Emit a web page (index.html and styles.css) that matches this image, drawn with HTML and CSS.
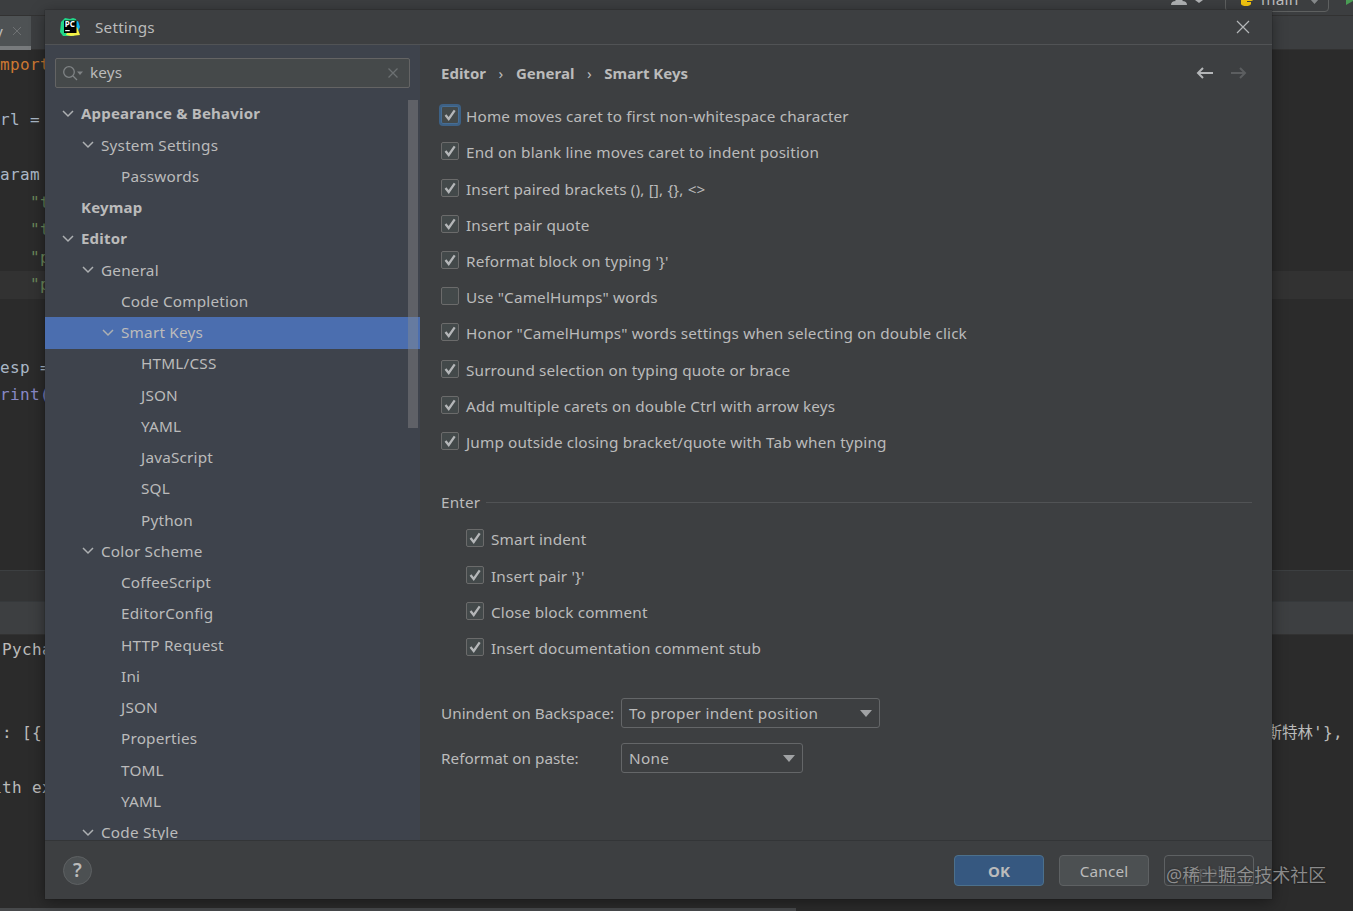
FILE: index.html
```
<!DOCTYPE html>
<html lang="en">
<head>
	<meta charset="UTF-8">
	<title>Settings</title>
	<link rel="stylesheet" href="styles.css">
</head>
<body>
	<!-- IDE window behind the dialog -->
	<div id="ide">
		<div class="toolbar">
			<svg class="user" width="34" height="10"><circle cx="8" cy="-3" r="5"/><path d="M0 5q0-4 5-4h6q5 0 5 4z"/><path d="M24 0h8l-4 3z"/></svg>
			<span class="sep"></span>
			<div class="run-config">
				<svg width="17" height="16" viewBox="0 0 17 16"><path fill="#3e7dae" d="M1 4q0-2 3-2h5v3H4v5H1z"/><path fill="#f2c40f" d="M16 6q0 5-3 5H9v1h4v2q-1 2-5 2t-5-2v-3q0-3 3-3h4q2 0 2-4h2q2 0 2 2z"/></svg>
				<span>main</span>
				<svg width="9" height="6"><path d="M0 0h9L4.500 5z" fill="#85888a"/></svg>
			</div>
			<svg class="play" width="12" height="14"><path d="M0 0l12 6L0 13z" fill="#499c54"/></svg>
		</div>
		<div class="tabs"><div class="tab"><span>y</span><svg width="10" height="10"><path d="M1 1l8 8M9 1L1 9"/></svg></div></div>
		<div class="editor">
			<p class="kw">import</p>
			<p></p>
			<p>url =</p>
			<p></p>
			<p>param</p>
			<p class="str">    "t</p>
			<p class="str">    "t</p>
			<p class="str">    "p</p>
			<p class="str current">    "p</p>
			<p></p>
			<p></p>
			<p>resp =</p>
			<p class="fn">print(</p>
		</div>
		<div class="split"></div>
		<div class="tool-head"></div>
		<div class="console">
			<p>(Pycha</p>
			<p></p>
			<p></p>
			<p class="wide"><span> : [{</span><span><span class="zh">斯特林</span>'},</span></p>
			<p></p>
			<p>ith ex</p>
		</div>
		<div class="status"></div>
	</div>

	<div id="dialog">
		<div class="titlebar">
			<svg class="logo" width="20" height="20" viewBox="0 0 20 20">
				<path fill="#21d789" d="M1 5l4-4 5 1 3-1 3 1 1 4-3 13-11 0-3-4z"/>
				<path fill="#0bb5f0" d="M15 5l3-1 2 6-2 4-4 1z"/>
				<path fill="#f5f046" d="M7 16l10-6 3 8-9 1-5-1z"/>
				<path fill="#000" d="M4 3.500h12.500v12.500H4z"/>
				<text x="4.700" y="10.200" font-size="8">PC</text>
				<path fill="#fff" d="M5.200 13h4.500v1.200H5.200z"/>
			</svg>
			<span class="title">Settings</span>
			<svg class="close" width="14" height="14"><path d="M1 1l12 12M13 1L1 13"/></svg>
		</div>
		<div class="main">
			<div class="sidebar">
				<div class="search">
					<svg width="22" height="16"><circle cx="6" cy="7" r="5.300"/><path d="M10 11l4 4"/><path class="arrow" d="M14 6.500h6l-3 3.500z"/></svg>
					<span>keys</span>
					<svg class="clear" width="12" height="12"><path d="M1.500 1.500l9 9M10.500 1.500l-9 9"/></svg>
				</div>
				<ul class="tree">
					<li class="l0 open"><b>Appearance &amp; Behavior</b></li>
					<li class="l1 open">System Settings</li>
					<li class="l2">Passwords</li>
					<li class="l0"><b>Keymap</b></li>
					<li class="l0 open"><b>Editor</b></li>
					<li class="l1 open">General</li>
					<li class="l2">Code Completion</li>
					<li class="l2 open selected">Smart Keys</li>
					<li class="l3">HTML/CSS</li>
					<li class="l3">JSON</li>
					<li class="l3">YAML</li>
					<li class="l3">JavaScript</li>
					<li class="l3">SQL</li>
					<li class="l3">Python</li>
					<li class="l1 open">Color Scheme</li>
					<li class="l2">CoffeeScript</li>
					<li class="l2">EditorConfig</li>
					<li class="l2">HTTP Request</li>
					<li class="l2">Ini</li>
					<li class="l2">JSON</li>
					<li class="l2">Properties</li>
					<li class="l2">TOML</li>
					<li class="l2">YAML</li>
					<li class="l1 open">Code Style</li>
				</ul>
				<div class="scrollbar"></div>
			</div>
			<div class="content">
				<div class="crumbs">
					<b>Editor</b><i>›</i><b>General</b><i>›</i><b>Smart Keys</b>
					<svg width="54" height="16"><path class="back" d="M18 8H3M8 3L3 8l5 5"/><path class="forward" d="M36 8h14M45 3l5 5-5 5"/></svg>
				</div>
				<div class="checks">
					<label class="on focus">Home moves caret to first non-whitespace character</label>
					<label class="on">End on blank line moves caret to indent position</label>
					<label class="on">Insert paired brackets (), [], {}, &lt;&gt;</label>
					<label class="on">Insert pair quote</label>
					<label class="on">Reformat block on typing '}'</label>
					<label>Use "CamelHumps" words</label>
					<label class="on">Honor "CamelHumps" words settings when selecting on double click</label>
					<label class="on">Surround selection on typing quote or brace</label>
					<label class="on">Add multiple carets on double Ctrl with arrow keys</label>
					<label class="on">Jump outside closing bracket/quote with Tab when typing</label>
				</div>
				<div class="group">Enter</div>
				<div class="checks indent">
					<label class="on">Smart indent</label>
					<label class="on">Insert pair '}'</label>
					<label class="on">Close block comment</label>
					<label class="on">Insert documentation comment stub</label>
				</div>
				<div class="field"><span>Unindent on Backspace:</span><div class="combo">To proper indent position</div></div>
				<div class="field"><span>Reformat on paste:</span><div class="combo short">None</div></div>
			</div>
		</div>
		<div class="footer">
			<div class="help">?</div>
			<div class="btn ok">OK</div>
			<div class="btn">Cancel</div>
			<div class="btn disabled">Apply</div>
		</div>
	</div>
	<div class="watermark">@稀土掘金技术社区</div>
	<script>
		(function() {
			var ns="http://www.w3.org/2000/svg";
			//生成小图标
			function icon(cls,w,h,d) {
				var svg=document.createElementNS(ns,"svg");
				var path=document.createElementNS(ns,"path");
				svg.setAttribute("class",cls);
				svg.setAttribute("width",w);
				svg.setAttribute("height",h);
				path.setAttribute("d",d);
				svg.appendChild(path);
				return svg;
			}
			//树节点箭头
			document.querySelectorAll(".tree .open").forEach(function(li) {
				li.prepend(icon("chevron",12,8,"M1 1l5 5 5-5"));
			});
			//复选框
			document.querySelectorAll(".checks label").forEach(function(label) {
				label.prepend(icon("box",18,18,label.classList.contains("on")?"M3.500 8l3.200 4L12.700 3.300":""));
			});
			//下拉箭头
			document.querySelectorAll(".combo").forEach(function(combo) {
				combo.append(icon("down",12,7,"M0 0h12L6 7z"));
			});
		})();
	</script>
</body>
</html>
```
FILE: styles.css
```
* {
	box-sizing: border-box;
}
body {
	margin: 0;
	width: 1353px;
	height: 911px;
	overflow: hidden;
	position: relative;
	background-color: #2b2b2b;
	color: #bbbbbb;
	font-family: "Noto Sans", "Noto Sans CJK SC", sans-serif;
	font-size: 15.3px;
	letter-spacing: 0.15px;
}
b {
	font-size: 15px;
	letter-spacing: 0;
}
p, ul {
	margin: 0;
	padding: 0;
}
svg {
	display: block;
	flex: none;
	fill: none;
}

/* background IDE */
#ide {
	height: 911px;
	display: flex;
	flex-direction: column;
	overflow: hidden;
}
.toolbar {
	height: 16px;
	display: flex;
	padding-left: 1171px;
	background-color: #3c3e40;
	border-bottom: 1px solid #323232;
	overflow: hidden;
}
.user {
	fill: #afb1b3;
}
.sep {
	width: 1px;
	height: 8px;
	margin: 0 12px 0 8px;
	background-color: #515151;
}
.run-config {
	width: 104px;
	height: 32px;
	margin-top: -20px;
	padding: 9px 12px 0;
	display: flex;
	align-items: flex-start;
	border: 1px solid #5e6060;
	border-radius: 4px;
	line-height: 20px;
}
.run-config span {
	margin: -1px 12px 0 6px;
	font-size: 15.5px;
}
.run-config svg + span + svg {
	margin-top: 9px;
}
.play {
	margin: -8px 0 0 17px;
}
.tabs {
	height: 34px;
	background-color: #3c3e40;
	border-bottom: 1px solid #323232;
}
.tab {
	width: 31px;
	height: 34px;
	display: flex;
	align-items: center;
	gap: 9px;
	background-color: #4e5254;
	border-bottom: 4px solid #787b7d;
}
.tab span {
	width: 3px;
	text-indent: -5px;
}
.tab path {
	stroke: #6e7173;
}
.editor, .console {
	flex: none;
	font-family: "DejaVu Sans Mono", monospace;
	font-size: 16px;
	letter-spacing: 0.37px;
	line-height: 27.5px;
	color: #a9b7c6;
}
.editor {
	height: 520px;
	padding-top: 1px;
}
.editor p {
	height: 27.5px;
	text-indent: -10px;
	white-space: pre;
}
.editor .kw {
	color: #cc7832;
}
.editor .str {
	color: #6a8759;
}
.editor .fn {
	color: #8888c6;
}
.editor .current {
	background-color: #323232;
}
.split {
	height: 31px;
	background-color: #333435;
	border-top: 1px solid #3c3f41;
}
.tool-head {
	height: 34px;
	background-color: #3d3f41;
	border-top: 1px solid #36393b;
	border-bottom: 1px solid #323232;
}
.console {
	height: 273px;
	padding-top: 1px;
	color: #bbbbbb;
}
.console p {
	height: 27.5px;
	text-indent: -8px;
	white-space: pre;
}
.console .wide {
	display: flex;
	justify-content: space-between;
	padding-right: 10px;
}
.console .zh {
	font: 15.5px "Noto Sans CJK SC", sans-serif;
	letter-spacing: 0;
}
.status {
	width: 796px;
	height: 3px;
	background-color: #47494b;
}

/* dialog */
#dialog {
	position: absolute;
	left: 45px;
	top: 10px;
	width: 1227px;
	height: 889px;
	display: flex;
	flex-direction: column;
	background-color: #3d3f41;
	box-shadow: 0 0 1px #1c1c1c, 0 3px 14px rgba(0, 0, 0, 0.4);
}
.titlebar {
	height: 35px;
	display: flex;
	align-items: center;
	padding: 0 22px 0 15px;
	border-bottom: 1px solid #515355;
}
.logo text {
	font-family: "Noto Sans", sans-serif;
	font-weight: bold;
	letter-spacing: 0;
	fill: #fff;
}
.title {
	margin-left: 15px;
	flex: 1;
	letter-spacing: 0.2px;
}
.close {
	stroke: #b4b6b8;
	stroke-width: 1.2;
}
.main {
	height: 795px;
	display: flex;
}
.sidebar {
	position: relative;
	width: 375px;
	overflow: hidden;
	background-color: #3e434c;
}
.search {
	height: 30px;
	margin: 13px 10px 10px;
	padding: 0 10px 0 7px;
	display: flex;
	align-items: center;
	background-color: #45494a;
	border: 1px solid #646464;
	border-radius: 2px;
}
.search span {
	flex: 1;
	margin-left: 5px;
	padding-bottom: 2px;
}
.search svg {
	stroke: #7f8385;
	stroke-width: 1.3;
}
.search .arrow {
	fill: #7f8385;
	stroke: none;
}
.search .clear {
	stroke: #6c7072;
}
.tree {
	padding-top: 0.7px;
	list-style: none;
	letter-spacing: 0.2px;
}
.tree b {
	letter-spacing: 0.2px;
}
.tree li {
	height: 31.25px;
	padding-bottom: 2px;
	display: flex;
	align-items: center;
	white-space: nowrap;
}
.l0 {
	padding-left: 36px;
}
.l1 {
	padding-left: 56px;
}
.l2 {
	padding-left: 76px;
}
.l3 {
	padding-left: 96px;
}
.chevron {
	margin: 1px 7px 0 -19px;
	stroke: #adb0b2;
	stroke-width: 1.5;
}
.selected {
	background-color: #4b6eaf;
}
.scrollbar {
	position: absolute;
	left: 363px;
	top: 55px;
	width: 10px;
	height: 328px;
	background-color: rgba(140, 140, 140, 0.42);
}
.content {
	flex: 1;
	padding: 13px 20px 0 21px;
}
.crumbs {
	height: 30px;
	display: flex;
	align-items: center;
}
.crumbs b, .crumbs i {
	padding-bottom: 1px;
}
.crumbs i {
	width: 30px;
	text-align: center;
	font-style: normal;
}
.crumbs svg {
	margin: 0 3px 0 auto;
	stroke-width: 2;
}
.back {
	stroke: #b4b6b8;
}
.forward {
	stroke: #5c5e60;
}
.checks {
	padding-top: 10px;
}
.checks label {
	height: 36.22px;
	display: flex;
	align-items: center;
}
.box {
	margin: 0 7px 2px 0;
	background-color: #43494a;
	border: 1px solid #6b6b6b;
	border-radius: 2px;
	stroke: #b4b6b8;
	stroke-width: 2.3;
}
.focus .box {
	border-color: #466d94;
	box-shadow: 0 0 0 2px #3d6185;
}
.group {
	height: 24px;
	margin-top: 30px;
	display: flex;
	align-items: center;
}
.group::after {
	content: "";
	flex: 1;
	height: 1px;
	margin: 1px 0 0 6px;
	background-color: #515355;
}
.indent {
	padding: 7px 0 0 25px;
}
.field {
	height: 30px;
	margin-bottom: 15px;
	display: flex;
	align-items: center;
}
.indent + .field {
	margin-top: 32px;
}
.field span {
	width: 180px;
	letter-spacing: 0;
	white-space: nowrap;
}
.combo {
	width: 259px;
	height: 30px;
	display: flex;
	align-items: center;
	justify-content: space-between;
	padding: 0 7px;
	letter-spacing: 0.28px;
	border: 1px solid #646668;
	border-radius: 3px;
}
.short {
	width: 182px;
}
.down {
	fill: #a0a2a4;
}
.footer {
	height: 59px;
	display: flex;
	align-items: center;
	gap: 15px;
	padding: 0 18px;
	border-top: 1px solid #333537;
}
.help {
	width: 29px;
	height: 29px;
	margin-right: auto;
	border: 1px solid #5e6163;
	border-radius: 50%;
	background-color: #4c5052;
	font-size: 19px;
	font-weight: 600;
	line-height: 26px;
	text-align: center;
}
.btn {
	width: 90px;
	height: 31px;
	border: 1px solid #5e6163;
	border-radius: 4px;
	background-color: #4c5052;
	line-height: 30px;
	text-align: center;
}
.ok {
	background-color: #365880;
	border-color: #4c708c;
	font-size: 15px;
	font-weight: bold;
}
.disabled {
	background-color: transparent;
	color: #606264;
}
.watermark {
	position: absolute;
	left: 1166px;
	top: 861px;
	font-size: 18px;
	letter-spacing: 0;
	color: rgba(175, 175, 175, 0.75);
	text-shadow: 0 0 2px rgba(0, 0, 0, 0.5);
	white-space: nowrap;
}
```
